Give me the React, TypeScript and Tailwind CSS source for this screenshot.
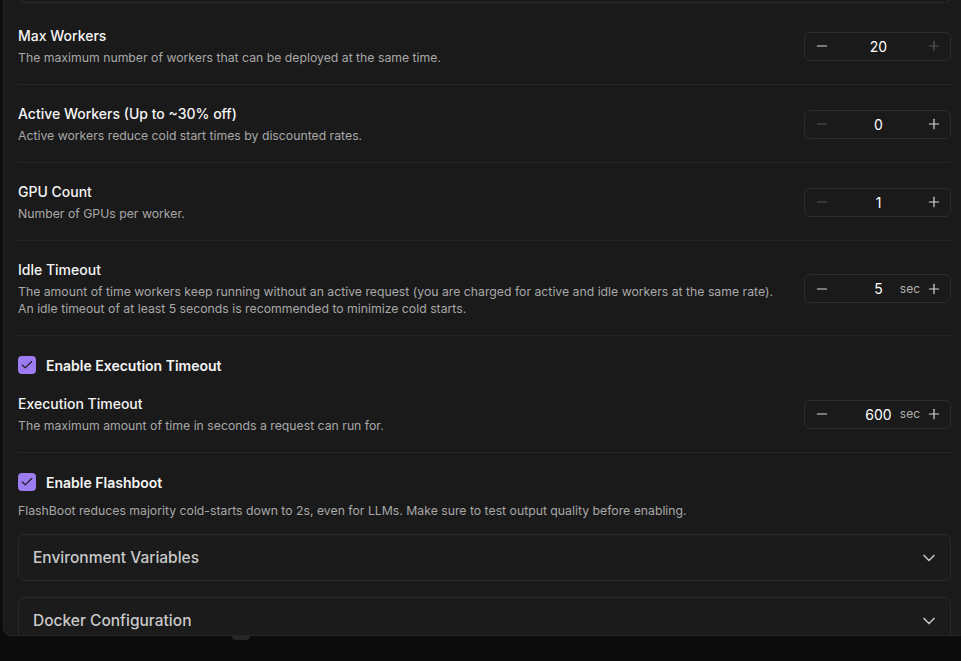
import { Check, ChevronDown, Minus, Plus } from 'lucide-react'

type StepperProps = {
  value: string
  unit?: string
  minusOff?: boolean
  plusOff?: boolean
}

function Stepper({ value, unit, minusOff, plusOff }: StepperProps) {
  return (
    <div className="flex h-[29px] w-[147px] shrink-0 items-center rounded-md border border-[#2c2c2c]">
      <button className={`flex h-full w-[34px] items-center justify-center ${minusOff ? 'text-[#575757]' : 'text-[#d6d6d6]'}`}>
        <Minus size={16} strokeWidth={1.8} />
      </button>
      <div className="relative flex h-full flex-1 items-center justify-center">
        <span className="text-[14px] text-white">{value}</span>
        {unit && <span className="absolute right-[-2px] text-[12px] text-[#b0b0b0]">{unit}</span>}
      </div>
      <button className={`flex h-full w-8 items-center justify-center ${plusOff ? 'text-[#575757]' : 'text-[#d6d6d6]'}`}>
        <Plus size={16} strokeWidth={1.8} />
      </button>
    </div>
  )
}

function SettingRow({
  title,
  desc,
  children,
}: {
  title: string
  desc: React.ReactNode
  children: React.ReactNode
}) {
  return (
    <div className="flex items-center justify-between gap-6 border-b border-[#262626] pt-[19px] pb-[18px]">
      <div>
        <div className="text-[14px] leading-5 font-medium text-[#f5f5f5]">{title}</div>
        <div className="mt-[3px] text-[12.25px] leading-[17px] text-[#a8a8a8]">{desc}</div>
      </div>
      {children}
    </div>
  )
}

function CheckRow({ label }: { label: string }) {
  return (
    <div className="flex h-5 items-center gap-[10px]">
      <div className="flex h-[18px] w-[18px] items-center justify-center rounded-[4px] bg-[#9d7cf3]">
        <Check size={14} strokeWidth={2} className="text-[#1a1a1a]" />
      </div>
      <span className="text-[14px] font-semibold text-[#f5f5f5]">{label}</span>
    </div>
  )
}

function Accordion({ label }: { label: string }) {
  return (
    <div className="flex h-[47px] items-center justify-between rounded-md border border-[#2a2a2a] bg-[#1b1b1b] pr-[11px] pl-[14px]">
      <span className="text-[15.5px] font-medium text-[#c9c9c9]">{label}</span>
      <ChevronDown size={20} strokeWidth={2} className="text-[#c2c2c2]" />
    </div>
  )
}

export default function App() {
  return (
    <main
      className="h-[661px] w-[961px] overflow-hidden bg-[#0c0c0c]"
      style={{ fontFamily: 'Inter, "Noto Sans", sans-serif' }}
    >
      <div className="ml-[3px] h-[636px] w-[963px] overflow-hidden rounded-b-lg border-x border-b border-[#262626] bg-[#1a1a1a] px-[14px]">
        <div className="-mt-4 h-[19px] rounded-b-md border-x border-b border-[#2a2a2a]" />

        <div className="mt-[4px]">
          <SettingRow title="Max Workers" desc="The maximum number of workers that can be deployed at the same time.">
            <Stepper value="20" plusOff />
          </SettingRow>
          <SettingRow title="Active Workers (Up to ~30% off)" desc="Active workers reduce cold start times by discounted rates.">
            <Stepper value="0" minusOff />
          </SettingRow>
          <SettingRow title="GPU Count" desc="Number of GPUs per worker.">
            <Stepper value="1" minusOff />
          </SettingRow>
          <SettingRow
            title="Idle Timeout"
            desc={
              <>
                The amount of time workers keep running without an active request (you are charged for active and idle workers at the same rate).
                <br />
                An idle timeout of at least 5 seconds is recommended to minimize cold starts.
              </>
            }
          >
            <Stepper value="5" unit="sec" />
          </SettingRow>

          <div className="border-b border-[#262626] pt-[19px] pb-[18px]">
            <CheckRow label="Enable Execution Timeout" />
            <div className="mt-[19px] flex items-center justify-between gap-6">
              <div>
                <div className="text-[14px] leading-5 font-medium text-[#f5f5f5]">Execution Timeout</div>
                <div className="mt-[3px] text-[12.25px] leading-[17px] text-[#a8a8a8]">
                  The maximum amount of time in seconds a request can run for.
                </div>
              </div>
              <Stepper value="600" unit="sec" />
            </div>
          </div>

          <div className="pt-[19px]">
            <CheckRow label="Enable Flashboot" />
            <div className="mt-[10px] text-[12.25px] leading-[17px] text-[#a8a8a8]">
              FlashBoot reduces majority cold-starts down to 2s, even for LLMs. Make sure to test output quality before enabling.
            </div>
          </div>

          <div className="mt-[15px] space-y-4">
            <Accordion label="Environment Variables" />
            <Accordion label="Docker Configuration" />
          </div>
        </div>
      </div>
      <div className="ml-[232px] h-[4px] w-[18px] rounded-b-full bg-[#262626]" />
    </main>
  )
}
